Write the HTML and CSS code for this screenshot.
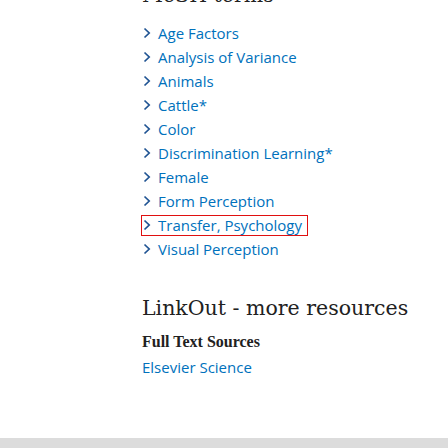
FILE: index.html
```html
<!DOCTYPE html>
<html>
<head>
<meta charset="utf-8">
<link rel="stylesheet" href="styles.css">
</head>
<body>
<div class="page">
  <main class="content">
    <h2 class="heading mesh-title">MeSH terms</h2>
    <ul class="keywords">
      <li><button class="kw"><svg class="chev" width="8" height="12" viewBox="0 0 8 12"><polyline points="1.5,1.5 6.2,6 1.5,10.5"/></svg><span>Age Factors</span></button></li>
      <li><button class="kw"><svg class="chev" width="8" height="12" viewBox="0 0 8 12"><polyline points="1.5,1.5 6.2,6 1.5,10.5"/></svg><span>Analysis of Variance</span></button></li>
      <li><button class="kw"><svg class="chev" width="8" height="12" viewBox="0 0 8 12"><polyline points="1.5,1.5 6.2,6 1.5,10.5"/></svg><span>Animals</span></button></li>
      <li><button class="kw"><svg class="chev" width="8" height="12" viewBox="0 0 8 12"><polyline points="1.5,1.5 6.2,6 1.5,10.5"/></svg><span>Cattle*</span></button></li>
      <li><button class="kw"><svg class="chev" width="8" height="12" viewBox="0 0 8 12"><polyline points="1.5,1.5 6.2,6 1.5,10.5"/></svg><span>Color</span></button></li>
      <li><button class="kw"><svg class="chev" width="8" height="12" viewBox="0 0 8 12"><polyline points="1.5,1.5 6.2,6 1.5,10.5"/></svg><span>Discrimination Learning*</span></button></li>
      <li><button class="kw"><svg class="chev" width="8" height="12" viewBox="0 0 8 12"><polyline points="1.5,1.5 6.2,6 1.5,10.5"/></svg><span>Female</span></button></li>
      <li><button class="kw"><svg class="chev" width="8" height="12" viewBox="0 0 8 12"><polyline points="1.5,1.5 6.2,6 1.5,10.5"/></svg><span>Form Perception</span></button></li>
      <li><button class="kw focused"><svg class="chev" width="8" height="12" viewBox="0 0 8 12"><polyline points="1.5,1.5 6.2,6 1.5,10.5"/></svg><span>Transfer, Psychology</span></button></li>
      <li><button class="kw"><svg class="chev" width="8" height="12" viewBox="0 0 8 12"><polyline points="1.5,1.5 6.2,6 1.5,10.5"/></svg><span>Visual Perception</span></button></li>
    </ul>
    <h2 class="heading linkout-title">LinkOut - more resources</h2>
    <h3 class="sources-title">Full Text Sources</h3>
    <a class="source" href="#">Elsevier Science</a>
  </main>
  <footer class="footer"></footer>
</div>
</body>
</html>
```
FILE: styles.css
```css
html, body {
  margin: 0;
  padding: 0;
  background: #fff;
}
.page {
  width: 448px;
  height: 448px;
  overflow: hidden;
  display: flex;
  flex-direction: column;
}
.content {
  flex: 1;
  padding-left: 142px;
}
.heading {
  font-family: "DejaVu Serif", serif;
  font-weight: 400;
  font-size: 20.5px;
  line-height: 28px;
  color: #212121;
}
.mesh-title {
  margin: -19px 0 12px;
}
.keywords {
  list-style: none;
  margin: 0;
  padding: 0;
}
.keywords li {
  height: 24px;
  display: flex;
  align-items: center;
}
.kw {
  border: 1px solid transparent;
  background: none;
  padding: 0 5px 0 1px;
  margin: 0 0 0 -1px;
  font-family: "Open Sans", sans-serif;
  font-size: 15px;
  line-height: 19px;
  color: #0071bc;
  display: flex;
  align-items: center;
  gap: 7px;
  cursor: pointer;
}
.kw.focused {
  border-color: #e01010;
}
.chev {
  display: block;
  flex: none;
  fill: none;
  stroke: #205493;
  stroke-width: 1.7;
  margin-top: -1px;
}
.linkout-title {
  margin: 33px 0 0;
}
.sources-title {
  font-family: "Liberation Serif", serif;
  font-weight: 700;
  font-size: 16px;
  line-height: 20px;
  color: #212121;
  margin: 10px 0 0;
}
.source {
  display: block;
  margin-top: 4px;
  font-family: "Open Sans", sans-serif;
  font-size: 15px;
  line-height: 22px;
  color: #0071bc;
  text-decoration: none;
}
.footer {
  flex: none;
  height: 10px;
  background: #dcdcdc;
}
```
